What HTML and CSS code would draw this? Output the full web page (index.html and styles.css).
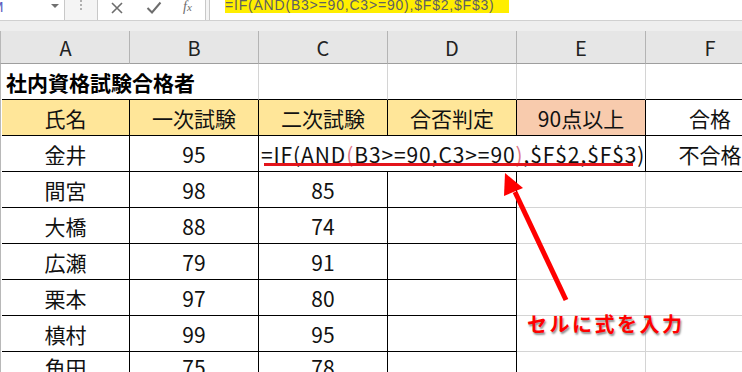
FILE: index.html
```html
<!DOCTYPE html>
<html lang="ja">
<head>
<meta charset="utf-8">
<title>社内資格試験合格者</title>
<link rel="stylesheet" href="styles.css">
</head>
<body>
<div class="app">
  <div class="fbar">
    <div class="namebox"><span class="nb-frag">M</span><span class="nb-drop"></span></div>
    <div class="fbar-sep"><span class="dots"></span></div>
    <div class="fbar-btns">
      <svg class="ic" width="14" height="14" viewBox="0 0 14 14"><path d="M2 2 L12 12 M12 2 L2 12" stroke="#6d6d6d" stroke-width="1.6" fill="none"/></svg>
      <svg class="ic" width="16" height="14" viewBox="0 0 16 14"><path d="M1.5 7 L6 11.5 L14.5 1.5" stroke="#6d6d6d" stroke-width="2" fill="none"/></svg>
      <span class="fx"><i>f</i><span class="fx-x">x</span></span>
    </div>
    <div class="finput"><span class="fbar-text">=IF(AND(B3&gt;=90,C3&gt;=90),$F$2,$F$3)</span></div>
  </div>
  <div class="band"></div>
  <div class="sheet">
    <div class="rh rh-top"></div>
    <div class="ch">A</div><div class="ch">B</div><div class="ch">C</div><div class="ch">D</div><div class="ch">E</div><div class="ch">F</div>

    <div class="rh"></div>
    <div class="cell title span2 bb">社内資格試験合格者</div>
    <div class="cell bb"></div><div class="cell bb"></div><div class="cell bb"></div><div class="cell bb"></div>

    <div class="rh"></div>
    <div class="cell b hy">氏名</div>
    <div class="cell b hy">一次試験</div>
    <div class="cell b hy">二次試験</div>
    <div class="cell b hy">合否判定</div>
    <div class="cell b hp">90点以上</div>
    <div class="cell b">合格</div>

    <div class="rh"></div>
    <div class="cell b">金井</div>
    <div class="cell b">95</div>
    <div class="cell b span3 edit"><span class="formula">=IF(AND<span class="pk">(</span>B3&gt;=90,C3&gt;=90<span class="pk">)</span>,$F$2,$F$3)</span></div>
    <div class="cell b">不合格</div>

    <div class="rh"></div>
    <div class="cell b">間宮</div><div class="cell b">98</div><div class="cell b">85</div><div class="cell b"></div><div class="cell"></div><div class="cell"></div>
    <div class="rh"></div>
    <div class="cell b">大橋</div><div class="cell b">88</div><div class="cell b">74</div><div class="cell b"></div><div class="cell"></div><div class="cell"></div>
    <div class="rh"></div>
    <div class="cell b">広瀬</div><div class="cell b">79</div><div class="cell b">91</div><div class="cell b"></div><div class="cell"></div><div class="cell"></div>
    <div class="rh"></div>
    <div class="cell b">栗本</div><div class="cell b">97</div><div class="cell b">80</div><div class="cell b"></div><div class="cell"></div><div class="cell"></div>
    <div class="rh"></div>
    <div class="cell b">槙村</div><div class="cell b">99</div><div class="cell b">95</div><div class="cell b"></div><div class="cell"></div><div class="cell"></div>
    <div class="rh"></div>
    <div class="cell b">角田</div><div class="cell b">75</div><div class="cell b">78</div><div class="cell b"></div><div class="cell"></div><div class="cell"></div>
  </div>

  <div class="underline"></div>
  <svg class="arrow" width="80" height="140" viewBox="0 0 80 140">
    <line x1="67" y1="130" x2="16" y2="22" stroke="#ff0000" stroke-width="5"/>
    <polygon points="6,3 5,26 24,18" fill="#ff0000"/>
  </svg>
  <div class="note">セルに式を入力</div>
</div>
</body>
</html>
```

FILE: styles.css
```css
* { box-sizing: border-box; }
html, body { margin: 0; padding: 0; background: #fff; }
body { width: 742px; height: 372px; overflow: hidden; }
.app { position: relative; width: 742px; height: 372px; overflow: hidden; font-family: "Noto Sans CJK JP", "Noto Sans", sans-serif; }

.fbar { display: flex; height: 21px; background: #f4f4f4; border-bottom: 1px solid #d0d0d0; }
.namebox { position: relative; width: 65px; background: #fff; border-right: 1px solid #c8c8c8; overflow: hidden; }
.nb-frag { position: absolute; left: -9px; top: -2px; font: 15px "Liberation Sans", sans-serif; color: #6060c0; }
.nb-drop { position: absolute; left: 51px; top: 4px; width: 0; height: 0; border-left: 4px solid transparent; border-right: 4px solid transparent; border-top: 4px solid #707070; }
.fbar-sep { width: 32px; display: flex; justify-content: center; }
.dots { width: 2px; height: 10px; margin-top: 0; background: repeating-linear-gradient(#b0b0b0 0 2px, transparent 2px 4px); }
.fbar-btns { width: 109px; background: #fff; border-left: 1px solid #c8c8c8; border-right: 1px solid #c8c8c8; display: flex; align-items: center; padding-left: 12px; gap: 0; }
.fbar-btns .ic { display: block; margin-top: -4px; }
.fbar-btns .ic:first-child { margin-right: 22px; }
.fbar-btns .ic:nth-child(2) { margin-right: 21px; }
.fx { font-family: "Liberation Serif", serif; color: #6d6d6d; font-size: 14px; margin-top: -6px; }
.fx i { font-style: italic; }
.fx-x { font-size: 11px; font-style: italic; }
.finput { flex: 1; background: #fff; margin-left: 3px; border-left: 1px solid #c8c8c8; padding-left: 15px; position: relative; }
.fbar-text { display: inline-block; background: #ffee00; color: #606060; font: 14px/13px "Liberation Sans", sans-serif; padding: 0 14px 1px 0; letter-spacing: 0.8px; height: 14px; vertical-align: top; position: relative; top: -1px; }

.band { height: 10px; background: #eeeeee; }

.sheet { display: grid; grid-template-columns: 2px 128px 129px 129px 129px 129px 129px; grid-template-rows: 33px repeat(8, 36px); }
.rh { background: #fff; border-left: 1px solid #b8b8b8; }
.rh-top { background: #e6e6e6; border-bottom: 1px solid #9e9e9e; }
.ch { background: #e6e6e6; border-right: 1px solid #b4b4b4; border-bottom: 1px solid #9e9e9e; display: flex; align-items: center; justify-content: center; font-size: 20px; color: #222; padding-top: 1px; }

.cell { border-right: 1px solid #d4d4d4; border-bottom: 1px solid #d4d4d4; display: flex; align-items: center; justify-content: center; font-size: 21px; color: #111; white-space: nowrap; }
.cell.b { border-right-color: #000; border-bottom-color: #000; }
.cell.bb { border-bottom-color: #000; }
.span2 { grid-column: span 2; }
.span3 { grid-column: span 3; }
.title { justify-content: flex-start; padding-left: 4px; font-weight: bold; font-size: 21px; color: #000; }
.hy { background: #ffe699; }
.hp { background: #f8cbad; }
.edit { justify-content: flex-start; padding-left: 2px; overflow: hidden; }
.formula { letter-spacing: 0.9px; }
.pk { color: #e07a8a; }

.underline { position: absolute; left: 264px; top: 163px; width: 369px; height: 3px; background: #e3141b; }
.arrow { position: absolute; left: 499px; top: 170px; }
.note { position: absolute; left: 527px; top: 309px; color: #ff0000; font-weight: bold; font-size: 20px; letter-spacing: 2.5px; text-shadow: 1px 2px 2px rgba(0,0,0,0.45); }
```
